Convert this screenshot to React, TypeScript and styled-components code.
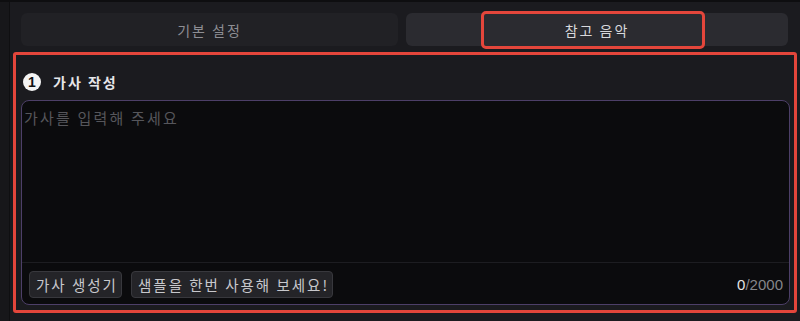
import React from "react";
import styled, { createGlobalStyle } from "styled-components";

const Global = createGlobalStyle`
  html, body { margin: 0; padding: 0; background: #1b1b1f; }
  body { font-family: "Noto Sans CJK KR", "Noto Sans", sans-serif; }
  * { box-sizing: border-box; }
`;

const Page = styled.div`
  display: flex;
  width: 800px;
  height: 321px;
  background: #1b1b1f;
  border-top: 2px solid #0e0e10;
  overflow: hidden;
`;

const Rail = styled.div`
  width: 10px;
  flex: none;
  background: #17171a;
  border-right: 1px solid #0f0f11;
`;

const Main = styled.div`
  flex: 1;
  display: flex;
  flex-direction: column;
  padding: 11px 3px 8px 3px;
  gap: 6px;
`;

const Tabs = styled.div`
  display: grid;
  grid-template-columns: 377px 1fr;
  gap: 8px;
  margin: 0 9px 0 8px;
  height: 33px;
`;

const Tab = styled.div<{ $active?: boolean }>`
  position: relative;
  display: flex;
  align-items: center;
  justify-content: center;
  border-radius: 6px;
  background: ${(p) => (p.$active ? "#2b2b30" : "#212125")};
  color: ${(p) => (p.$active ? "#d8d8dc" : "#8e8e94")};
  font-size: 14px;
  letter-spacing: 2px;
`;

const Highlight = styled.div`
  position: absolute;
  border: 3px solid #e4463b;
  border-radius: 5px;
  pointer-events: none;
`;

const Section = styled.section`
  flex: 1;
  display: flex;
  flex-direction: column;
  border: 3px solid #e4463b;
  border-radius: 3px;
  padding: 18px 4px 5px 5px;
  gap: 10px;
`;

const TitleRow = styled.div`
  display: flex;
  align-items: center;
  gap: 12px;
  padding-left: 2px;
  height: 17px;
`;

const Num = styled.span`
  flex: none;
  width: 18px;
  height: 18px;
  border-radius: 50%;
  background: #f4f4f4;
  color: #111;
  font-family: "Liberation Sans", Arial, sans-serif;
  font-weight: 700;
  font-size: 14px;
  display: flex;
  align-items: center;
  justify-content: center;
`;

const Title = styled.span`
  color: #e6e6e9;
  font-weight: 700;
  font-size: 14px;
  letter-spacing: 2px;
`;

const Editor = styled.div`
  flex: 1;
  display: flex;
  flex-direction: column;
  background: #0b0b0d;
  border: 1px solid #4d3f68;
  border-radius: 8px;
  overflow: hidden;
`;

const Input = styled.textarea`
  flex: 1;
  resize: none;
  background: transparent;
  border: none;
  outline: none;
  border-bottom: 1px solid #1d1d21;
  color: #d0d0d0;
  font-family: "Noto Sans CJK KR", "Noto Sans", sans-serif;
  font-size: 15px;
  letter-spacing: 2.2px;
  padding: 6px 2px;
  &::placeholder { color: #56565b; }
`;

const Footer = styled.div`
  height: 41px;
  flex: none;
  display: flex;
  align-items: center;
  padding: 1px 6px 0 7px;
  gap: 9px;
`;

const Btn = styled.button`
  height: 27px;
  padding: 0 3px 0 6px;
  background: #242428;
  border: 1px solid #38383d;
  border-radius: 4px;
  color: #c8c8cc;
  font-family: "Noto Sans CJK KR", "Noto Sans", sans-serif;
  font-size: 14.5px;
  letter-spacing: 2px;
  display: flex;
  align-items: center;
`;

const Counter = styled.div`
  margin-left: auto;
  font-family: "Liberation Sans", Arial, sans-serif;
  font-size: 15px;
  color: #85858a;
`;

const Cur = styled.span`
  color: #e4e4e4;
`;

export default function App() {
  return (
    <>
      <Global />
      <Page>
        <Rail />
        <Main>
          <Tabs>
            <Tab>기본 설정</Tab>
            <Tab $active>
              참고 음악
              <Highlight style={{ left: 75, top: -2, width: 224, height: 38 }} />
            </Tab>
          </Tabs>
          <Section>
            <TitleRow>
              <Num>1</Num>
              <Title>가사 작성</Title>
            </TitleRow>
            <Editor>
              <Input placeholder="가사를 입력해 주세요" />
              <Footer>
                <Btn>가사 생성기</Btn>
                <Btn>샘플을 한번 사용해 보세요!</Btn>
                <Counter>
                  <Cur>0</Cur>/2000
                </Counter>
              </Footer>
            </Editor>
          </Section>
        </Main>
      </Page>
    </>
  );
}
